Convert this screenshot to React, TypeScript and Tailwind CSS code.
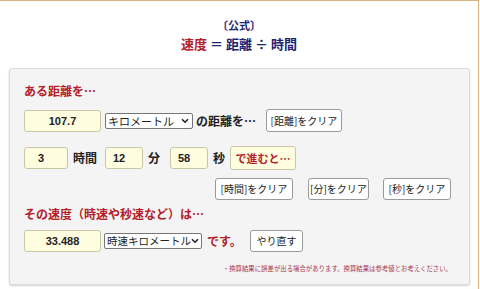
import React from "react";

const jp = { fontFamily: '"Noto Sans CJK JP", "Noto Sans", sans-serif' };
const num = { fontFamily: '"Liberation Sans", Arial, sans-serif' };

function NumInput({ value, w, small }: { value: string; w: string; small?: boolean }) {
  return (
    <input
      readOnly
      value={value}
      style={num}
      className={`${w} h-[22px] bg-[#fffde0] border border-[#c9c6a8] rounded-[3px] text-[11px] font-bold text-[#222] text-center ${small ? "pr-[10px]" : ""} outline-none`}
    />
  );
}

function Btn({ children, w, h = "h-[22px]" }: { children: React.ReactNode; w: string; h?: string }) {
  return (
    <button
      style={jp}
      className={`${w} ${h} bg-white border border-[#9a9a9a] rounded-[3px] text-[10px] text-[#222] flex items-center justify-center leading-none`}
    >
      {children}
    </button>
  );
}

function Select({ label, w, size }: { label: string; w: string; size: string }) {
  return (
    <div
      role="combobox"
      className={`${w} h-[16px] flex items-center justify-between bg-white border border-[#767676] rounded-[2px] pl-[2px] pr-[3px] overflow-hidden`}
    >
      <span className={`${size} leading-[14px] text-[#222] whitespace-nowrap`}>{label}</span>
      <svg width="8" height="6" viewBox="0 0 8 6" className="shrink-0">
        <path d="M1 1.2 L4 4.2 L7 1.2" fill="none" stroke="#222" strokeWidth="1.6" />
      </svg>
    </div>
  );
}

export default function App() {
  return (
    <div
      className="w-[479px] h-[289px] overflow-hidden bg-white border-t border-r border-[#d8b37c]"
      style={jp}
    >
      <div className="pt-[16px] text-center">
        <div className="text-[11px] font-bold text-[#1c2474] leading-[16px]">〔公式〕</div>
        <div className="text-[13px] font-bold leading-[20px] mt-[1px]">
          <span className="text-[#b3202a]">速度</span>
          <span className="text-[#1c2474]"> ＝ 距離 ÷ 時間</span>
        </div>
      </div>

      <div className="ml-[9px] mt-[14px] w-[461px] bg-[#f4f4f4] border border-[#dcdcdc] rounded-[3px] shadow-[0_1px_2px_rgba(0,0,0,0.18)] pl-[14px] pt-[13px] pb-[10px]">
        <div className="text-[12px] font-bold text-[#b3202a] leading-[18px]">ある距離を…</div>

        <div className="mt-[9px] flex items-center">
          <NumInput value="107.7" w="w-[77px]" />
          <div className="ml-[4px]">
            <Select label="キロメートル" w="w-[88px]" size="text-[11px]" />
          </div>
          <span className="ml-[3px] w-[70px] text-[12px] font-bold text-[#222] leading-[18px]">の距離を…</span>
          <Btn w="w-[76px]" h="h-[23px]">[距離]をクリア</Btn>
        </div>

        <div className="mt-[14px] flex items-center">
          <NumInput value="3" w="w-[44px]" small />
          <span className="ml-[5px] w-[32px] text-[12px] font-bold text-[#222] leading-[18px]">時間</span>
          <NumInput value="12" w="w-[38px]" small />
          <span className="ml-[5px] w-[22px] text-[12px] font-bold text-[#222] leading-[18px]">分</span>
          <NumInput value="58" w="w-[38px]" small />
          <span className="ml-[5px] w-[17px] text-[12px] font-bold text-[#222] leading-[18px]">秒</span>
          <button
            style={jp}
            className="w-[66px] h-[24px] bg-[#fffde0] border border-[#c9c6a8] rounded-[3px] text-[11px] font-bold text-[#b3202a] flex items-center justify-center leading-none"
          >
            で進むと…
          </button>
        </div>

        <div className="mt-[8px] flex items-center ml-[191px]">
          <Btn w="w-[78px]">[時間]をクリア</Btn>
          <div className="ml-[15px]">
            <Btn w="w-[61px]">[分]をクリア</Btn>
          </div>
          <div className="ml-[14px]">
            <Btn w="w-[68px]">[秒]をクリア</Btn>
          </div>
        </div>

        <div className="mt-[5px] text-[12px] font-bold text-[#b3202a] leading-[18px]">
          その速度（時速や秒速など）は…
        </div>

        <div className="mt-[7px] flex items-center">
          <NumInput value="33.488" w="w-[77px]" />
          <div className="ml-[3px]">
            <Select label="時速キロメートル" w="w-[98px]" size="text-[10.5px]" />
          </div>
          <span className="ml-[5px] w-[43px] text-[12px] font-bold text-[#b3202a] leading-[18px]">です。</span>
          <Btn w="w-[53px]">やり直す</Btn>
        </div>

        <div className="mt-[12px] pr-[17px] text-right text-[6.4px] leading-[10px] text-[#a8364a]">
          ・換算結果に誤差が出る場合があります。換算結果は参考値とお考えください。
        </div>
      </div>
    </div>
  );
}
